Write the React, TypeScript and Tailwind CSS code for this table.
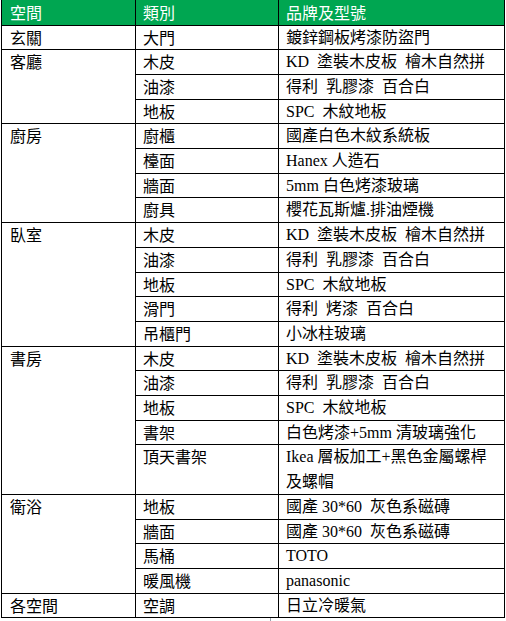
const sans = "font-['Noto_Sans_CJK_TC','Noto_Sans',sans-serif]";
const serif = "font-['Liberation_Serif','Noto_Sans_CJK_TC',serif]";

type Row = { space?: string; span?: number; cat: string; brand: string; tall?: boolean };

const rows: Row[] = [
  { space: "玄關", span: 1, cat: "大門", brand: "鍍鋅鋼板烤漆防盜門" },
  { space: "客廳", span: 3, cat: "木皮", brand: "KD  塗裝木皮板  檜木自然拼" },
  { cat: "油漆", brand: "得利  乳膠漆  百合白" },
  { cat: "地板", brand: "SPC  木紋地板" },
  { space: "廚房", span: 4, cat: "廚櫃", brand: "國產白色木紋系統板" },
  { cat: "檯面", brand: "Hanex 人造石" },
  { cat: "牆面", brand: "5mm 白色烤漆玻璃" },
  { cat: "廚具", brand: "櫻花瓦斯爐.排油煙機" },
  { space: "臥室", span: 5, cat: "木皮", brand: "KD  塗裝木皮板  檜木自然拼" },
  { cat: "油漆", brand: "得利  乳膠漆  百合白" },
  { cat: "地板", brand: "SPC  木紋地板" },
  { cat: "滑門", brand: "得利  烤漆  百合白" },
  { cat: "吊櫃門", brand: "小冰柱玻璃" },
  { space: "書房", span: 5, cat: "木皮", brand: "KD  塗裝木皮板  檜木自然拼" },
  { cat: "油漆", brand: "得利  乳膠漆  百合白" },
  { cat: "地板", brand: "SPC  木紋地板" },
  { cat: "書架", brand: "白色烤漆+5mm 清玻璃強化" },
  { cat: "頂天書架", brand: "Ikea 層板加工+黑色金屬螺桿及螺帽", tall: true },
  { space: "衛浴", span: 4, cat: "地板", brand: "國產 30*60  灰色系磁磚" },
  { cat: "牆面", brand: "國產 30*60  灰色系磁磚" },
  { cat: "馬桶", brand: "TOTO" },
  { cat: "暖風機", brand: "panasonic" },
  { space: "各空間", span: 1, cat: "空調", brand: "日立冷暖氣" },
];

export default function App() {
  return (
    <div className="w-[506px] h-[621px] bg-white overflow-hidden">
      <table className="ml-[1px] w-[504px] table-fixed border-collapse text-[16px] text-black">
        <colgroup>
          <col className="w-[134px]" />
          <col className="w-[143px]" />
          <col />
        </colgroup>
        <thead>
          <tr className={`bg-[#00a651] text-white ${sans}`}>
            <th className="border-x border-b border-black px-[8px] py-0 text-left align-top font-normal leading-[24.5px]">空間</th>
            <th className="border-x border-b border-black px-[7px] py-0 text-left align-top font-normal leading-[24.5px]">類別</th>
            <th className="border-x border-b border-black px-[7px] py-0 text-left align-top font-normal leading-[24.5px]">品牌及型號</th>
          </tr>
        </thead>
        <tbody>
          {rows.map((r, i) => (
            <tr key={i}>
              {r.space && (
                <td rowSpan={r.span} className={`border border-black px-[8px] py-0 align-top leading-[23.7px] ${sans}`}>
                  {r.space}
                </td>
              )}
              <td className={`border border-black px-[7px] py-0 align-top leading-[23.7px] ${sans}`}>
                {r.cat}
              </td>
              <td className={`border border-black pl-[7px] pr-[4px] py-0 align-top whitespace-pre-wrap ${r.tall ? "leading-[24.2px]" : "leading-[23.7px]"} ${serif}`}>
                {r.brand}
              </td>
            </tr>
          ))}
        </tbody>
      </table>
      <div className="ml-[270px] h-[3px] w-px bg-gray-400" />
    </div>
  );
}
